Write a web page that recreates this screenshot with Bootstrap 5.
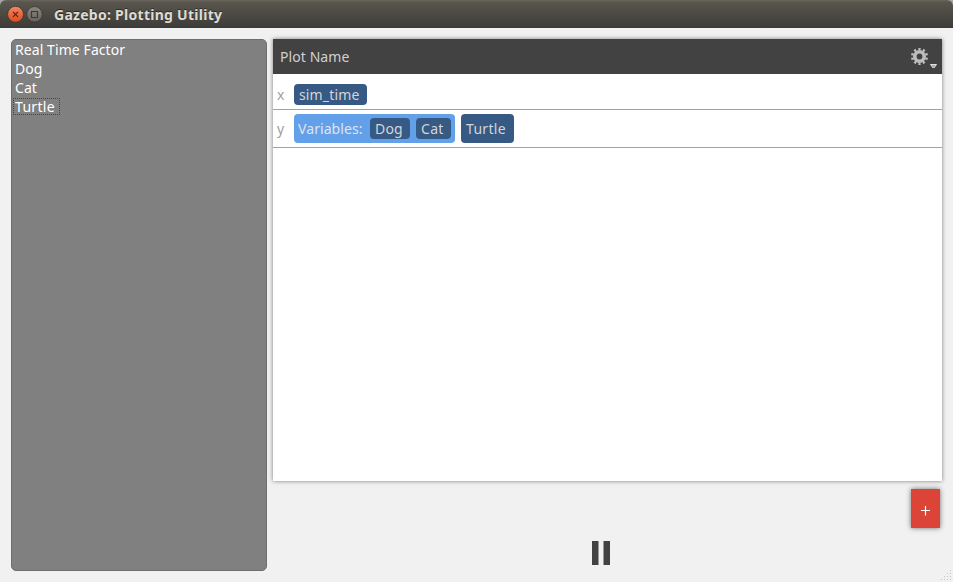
<!DOCTYPE html>
<html lang="en">
<head>
<meta charset="utf-8">
<title>Gazebo: Plotting Utility</title>
<link href="https://cdn.jsdelivr.net/npm/bootstrap@5.3.0/dist/css/bootstrap.min.css" rel="stylesheet">
<style>
body{font-family:"Noto Sans","Open Sans",sans-serif;font-size:14px;line-height:19px;letter-spacing:.08px;background:#f1f1f1;width:953px;height:582px;overflow:hidden}
.page-window{height:582px;background:#f1f1f1}
.title-strip{height:28px;padding-left:7px;background:linear-gradient(#6b675f 0,#59564e 2px,#3c3b37 100%);border-radius:6px 6px 0 0;color:#dfdbd2;font-weight:700}
.corner-bg{background:#a5a5a3}
.title-text{margin-left:11px;padding-top:1px;letter-spacing:.27px;text-shadow:0 -1px #2b2a27}
.workspace{padding:11px;height:554px}
.topics{width:256px;height:532px;background:#808080;border:1px solid #6e6e6e;border-radius:5px;color:#fff;padding:1px 0 0 1px}
.topic{padding:0 4px 0 2px;height:19px;line-height:18px;align-self:flex-start}
.topic-focus{outline:1px dotted #444;outline-offset:-1px;height:17px;width:47px;line-height:18px;letter-spacing:.3px}
.plots{margin-left:6px;width:669px}
.plot{height:442px;background:#fff;box-shadow:0 0 4px rgba(0,0,0,.5)}
.plot-head{height:35px;background:#424242;color:#d0d0d0;padding:0 5px 0 7px}
.axis{border-bottom:1px solid #a2a2a2;padding-left:4px;color:#a0a0a0}
.axis-x{height:36px;padding-top:6px}
.axis-y{height:38px}
.axis-name{width:17px}
.chip{background:#365a83;color:#d3d5d8;border-radius:4px;height:21px;padding:0 5px;line-height:22px;white-space:nowrap}
.chip-time{width:73px;letter-spacing:.15px}
.chip-dog{width:40px;letter-spacing:.2px}
.chip-cat{width:35px;margin-left:6px;letter-spacing:.3px}
.chip-tall{height:29px;line-height:30px;width:53px;margin-left:6px;letter-spacing:.3px}
.chip-group{background:#62a0ea;color:#e0e4ea;height:29px;width:161px;border-radius:4px;padding:0 4px}
.add-plot{width:29px;height:39px;margin:8px 2px 0 0;padding:3px 0 0!important;background:#db4437;box-shadow:0 0 5px rgba(0,0,0,.55)}
.pause-row{height:24px;margin-top:13px;padding-left:319px}
.size-grip{right:1px;bottom:0}
</style>
<script src="https://cdn.jsdelivr.net/npm/bootstrap@5.3.0/dist/js/bootstrap.bundle.min.js"></script>
</head>
<body>
<div class="page-window position-relative">
<div class="corner-bg">
<header class="title-strip d-flex align-items-center">
<svg width="36" height="18" viewBox="0 0 36 18">
<defs><linearGradient id="closeFill" x2="0" y2="1"><stop stop-color="#f58563"/><stop offset="1" stop-color="#dd4b1c"/></linearGradient><linearGradient id="maxFill" x2="0" y2="1"><stop stop-color="#898780"/><stop offset="1" stop-color="#64625b"/></linearGradient></defs>
<circle cx="8.5" cy="9.3" r="8" fill="url(#closeFill)" stroke="#37352f" stroke-width=".8"/>
<path d="M6 6.9l5 5M11 6.9l-5 5" stroke="#542514" stroke-width="1.2"/>
<circle cx="27.5" cy="9.3" r="7.8" fill="url(#maxFill)" stroke="#37352f" stroke-width=".8"/>
<path d="M24.5 6.5h6v6h-6z" fill="none" stroke="#393832" stroke-width="1.1"/>
</svg>
<div class="title-text">Gazebo: Plotting Utility</div>
</header>
</div>
<main class="workspace d-flex">
<aside class="topics d-flex flex-column flex-shrink-0">
<div class="topic">Real Time Factor</div><div class="topic">Dog</div><div class="topic">Cat</div><div class="topic topic-focus">Turtle</div>
</aside>
<section class="plots d-flex flex-column">
<div class="plot">
<div class="plot-head d-flex align-items-center justify-content-between">
<span>Plot Name</span>
<svg width="27" height="22" viewBox="0 0 27 22">
<circle cx="9.5" cy="10.5" r="4.7" fill="none" stroke="#bdbdbd" stroke-width="3.6"/>
<circle cx="9.5" cy="10.5" r="7.2" fill="none" stroke="#bdbdbd" stroke-width="2.8" pathLength="100" stroke-dasharray="4.8 5.2" stroke-dashoffset="-2.6"/>
<path d="M20.5 18.5h6l-3 4z" fill="#aaa" stroke="#e0e0e0"/>
</svg>
</div>
<div class="axis axis-x d-flex align-items-center"><span class="axis-name">x</span><span class="chip chip-time">sim_time</span></div>
<div class="axis axis-y d-flex align-items-center"><span class="axis-name">y</span>
<div class="chip-group d-flex align-items-center"><span class="me-auto">Variables:</span><span class="chip chip-dog">Dog</span><span class="chip chip-cat">Cat</span></div>
<span class="chip chip-tall">Turtle</span></div>
</div>
<button class="add-plot btn border-0 rounded-0 align-self-end d-flex align-items-center justify-content-center" aria-label="Add plot"><svg width="11" height="11"><path d="M1 5.5h9M5.5 1v9.5" stroke="#fff" stroke-width="1.2"/></svg></button>
<div class="pause-row"><svg class="d-block" width="19" height="24"><path d="M0 0h6v24H0zM12 0h6v24h-6z" fill="#424242"/><path d="M6 0h1v24H6zM11 0h1v24h-1z" fill="#999"/></svg></div>
</section>
</main>
<svg class="size-grip position-absolute" width="11" height="12"><path d="M9 .5h1M6 3.5h1M9 3.5h1M3 6.5h1M6 6.5h1M9 6.5h1M0 9.5h1M3 9.5h1M6 9.5h1M9 9.5h1" stroke="#c4c4c4"/></svg>
</div>
</body>
</html>
